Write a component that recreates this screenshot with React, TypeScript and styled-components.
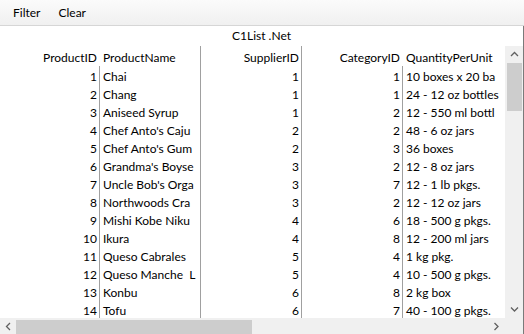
import React, { FC } from 'react';
import styled, { createGlobalStyle } from 'styled-components';

const GlobalStyle = createGlobalStyle`
  html, body {
    margin: 0;
    padding: 0;
    background: #ffffff;
  }
  body {
    font-family: Lato, "Noto Sans", sans-serif;
    font-size: 12px;
    color: #000000;
  }
`;

interface Product {
  id: number;
  name: string;
  supplierId: number;
  categoryId: number;
  quantity: string;
}

// the names are cut the way the list cuts them at the column edge
const products: Product[] = [
  { id: 1, name: 'Chai', supplierId: 1, categoryId: 1, quantity: '10 boxes x 20 ba' },
  { id: 2, name: 'Chang', supplierId: 1, categoryId: 1, quantity: '24 - 12 oz bottles' },
  { id: 3, name: 'Aniseed Syrup', supplierId: 1, categoryId: 2, quantity: '12 - 550 ml bottl' },
  { id: 4, name: "Chef Anto's Caju", supplierId: 2, categoryId: 2, quantity: '48 - 6 oz jars' },
  { id: 5, name: "Chef Anto's Gum", supplierId: 2, categoryId: 3, quantity: '36 boxes' },
  { id: 6, name: "Grandma's Boyse", supplierId: 3, categoryId: 2, quantity: '12 - 8 oz jars' },
  { id: 7, name: "Uncle Bob's Orga", supplierId: 3, categoryId: 7, quantity: '12 - 1 lb pkgs.' },
  { id: 8, name: 'Northwoods Cra', supplierId: 3, categoryId: 2, quantity: '12 - 12 oz jars' },
  { id: 9, name: 'Mishi Kobe Niku', supplierId: 4, categoryId: 6, quantity: '18 - 500 g pkgs.' },
  { id: 10, name: 'Ikura', supplierId: 4, categoryId: 8, quantity: '12 - 200 ml jars' },
  { id: 11, name: 'Queso Cabrales', supplierId: 5, categoryId: 4, quantity: '1 kg pkg.' },
  { id: 12, name: 'Queso Manche  L', supplierId: 5, categoryId: 4, quantity: '10 - 500 g pkgs.' },
  { id: 13, name: 'Konbu', supplierId: 6, categoryId: 8, quantity: '2 kg box' },
  { id: 14, name: 'Tofu', supplierId: 6, categoryId: 7, quantity: '40 - 100 g pkgs.' },
];

const MenuBar = styled.div`
  display: flex;
  height: 25px;
  padding-left: 4px;
  background: linear-gradient(#fbfbfb, #f0f0f0);
  border-bottom: 1px solid #d6d6d6;
`;

const MenuItem = styled.div`
  display: flex;
  align-items: center;
  padding: 0 9px;
  line-height: 25px;
`;

const ListFrame = styled.div`
  display: flex;
  flex-direction: column;
  width: 523px;
  border-right: 1px solid #7a7a7a;
`;

const Caption = styled.div`
  height: 20px;
  line-height: 19px;
  text-align: center;
`;

const Body = styled.div`
  display: flex;
  height: 272px;
`;

const Table = styled.div`
  display: grid;
  grid-template-columns: 100px 101px 101px 101px 102px;
  grid-template-rows: 20px;
  grid-auto-rows: 18px;
  width: 505px;
  overflow: hidden;
`;

const Cell = styled.div<{ $right?: boolean; $divider?: boolean; $header?: boolean }>`
  display: flex;
  box-sizing: border-box;
  align-items: ${(p) => (p.$header ? 'flex-end' : 'center')};
  justify-content: ${(p) => (p.$right ? 'flex-end' : 'flex-start')};
  padding: ${(p) => (p.$header ? '0 2px 1px 3px' : '2px 2px 0 3px')};
  border-right: 1px solid ${(p) => (p.$divider ? '#a0a0a0' : 'transparent')};
  white-space: pre;
  overflow: hidden;
  line-height: 15px;
`;

const VScroll = styled.div`
  display: flex;
  flex-direction: column;
  width: 18px;
  background: #f0f0f0;
`;

const ArrowBox = styled.div<{ $w: number; $h: number }>`
  display: flex;
  align-items: center;
  justify-content: center;
  flex: 0 0 auto;
  width: ${(p) => p.$w}px;
  height: ${(p) => p.$h}px;
`;

const VTrack = styled.div`
  flex: 1;
  display: flex;
  flex-direction: column;
  padding: 0 1px 0 2px;
`;

const VThumb = styled.div`
  height: 48px;
  background: #cdcdcd;
`;

const HScrollRow = styled.div`
  display: flex;
  height: 17px;
`;

const HScroll = styled.div`
  display: flex;
  width: 505px;
  background: #f0f0f0;
`;

const HTrack = styled.div`
  flex: 1;
  display: flex;
  align-items: center;
  padding: 2px 0 1px;
`;

const HThumb = styled.div`
  width: 236px;
  height: 14px;
  background: #cdcdcd;
`;

const Corner = styled.div`
  flex: 1;
  background: #f0f0f0;
`;

type Dir = 'up' | 'down' | 'left' | 'right';

const points: Record<Dir, string> = {
  up: '1,5 4.5,1.5 8,5',
  down: '1,1.5 4.5,5 8,1.5',
  left: '5,1 1.5,4.5 5,8',
  right: '1.5,1 5,4.5 1.5,8',
};

const Chevron: FC<{ dir: Dir }> = ({ dir }) => {
  const vertical = dir === 'up' || dir === 'down';
  return (
    <svg width={vertical ? 9 : 7} height={vertical ? 7 : 9} viewBox={vertical ? '0 0 9 7' : '0 0 7 9'}>
      <polyline points={points[dir]} fill="none" stroke="#606060" strokeWidth="1.3" />
    </svg>
  );
};

const columns = ['ProductID', 'ProductName', 'SupplierID', 'CategoryID', 'QuantityPerUnit'];

export default function App() {
  return (
    <>
      <GlobalStyle />
      <MenuBar>
        <MenuItem>Filter</MenuItem>
        <MenuItem>Clear</MenuItem>
      </MenuBar>
      <ListFrame>
        <Caption>C1List .Net</Caption>
        <Body>
          <Table>
            {columns.map((col, i) => (
              <Cell key={col} $header $right={i === 0 || i === 2 || i === 3} $divider={i === 1 || i === 2}>
                {col}
              </Cell>
            ))}
            {products.map((p) => (
              <React.Fragment key={p.id}>
                <Cell $right $divider>{p.id}</Cell>
                <Cell $divider>{p.name}</Cell>
                <Cell $right $divider>{p.supplierId}</Cell>
                <Cell $right $divider>{p.categoryId}</Cell>
                <Cell>{p.quantity}</Cell>
              </React.Fragment>
            ))}
          </Table>
          <VScroll>
            <ArrowBox $w={18} $h={17}>
              <Chevron dir="up" />
            </ArrowBox>
            <VTrack>
              <VThumb />
            </VTrack>
            <ArrowBox $w={18} $h={17}>
              <Chevron dir="down" />
            </ArrowBox>
          </VScroll>
        </Body>
        <HScrollRow>
          <HScroll>
            <ArrowBox $w={16} $h={17}>
              <Chevron dir="left" />
            </ArrowBox>
            <HTrack>
              <HThumb />
            </HTrack>
            <ArrowBox $w={17} $h={17}>
              <Chevron dir="right" />
            </ArrowBox>
          </HScroll>
          <Corner />
        </HScrollRow>
      </ListFrame>
    </>
  );
}
